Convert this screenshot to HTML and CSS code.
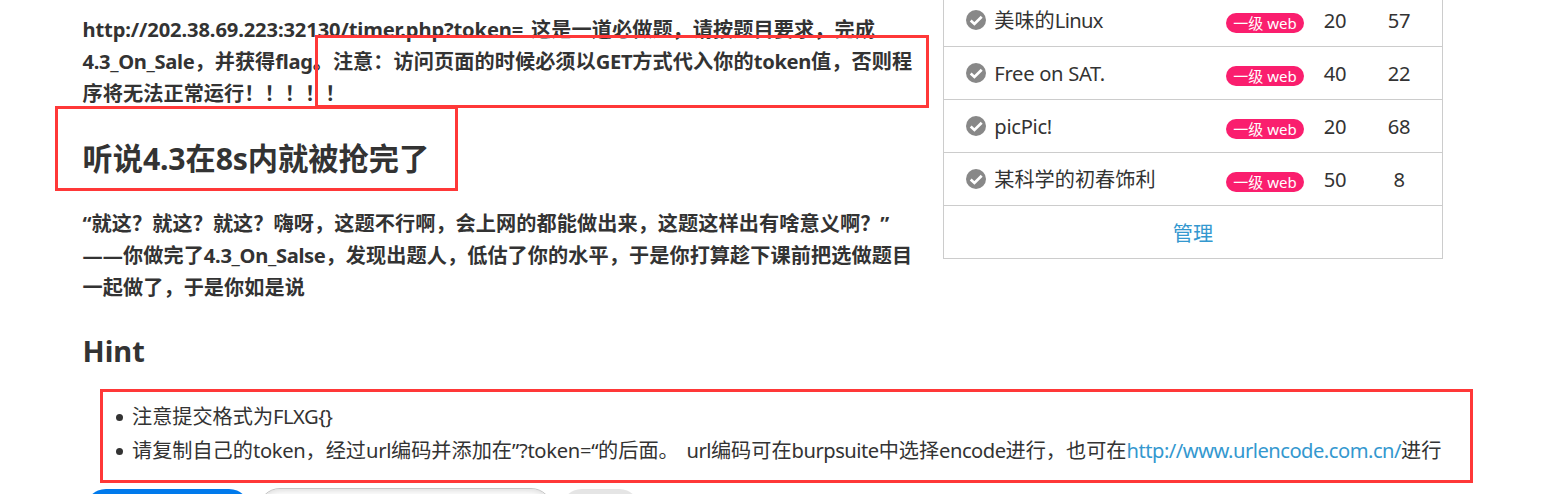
FILE: index.html
```html
<!DOCTYPE html>
<html lang="zh-CN">
<head>
<meta charset="utf-8">
<title>4.3_On_Sale</title>
<link rel="stylesheet" href="styles.css">
</head>
<body>
<svg class="defs" width="0" height="0"><symbol id="check" viewBox="0 0 20 20"><circle cx="10" cy="10" r="10" fill="#888"/><path d="M4.7 10.6 8.4 14 15.7 6.8" fill="none" stroke="#fff" stroke-width="2.7"/></symbol></svg>
<main class="page">
  <div class="columns">
    <article class="article">
      <h4 class="text"><span class="url">http://202.38.69.223:32130/timer.php?token=</span> 这是一道必做题，请按题目要求，完成<br><span class="b">4.3_On_Sale</span>，并获得<span class="b">flag</span>。注意：访问页面的时候必须以<span class="b">GET</span>方式代入你的<span class="b">token</span>值，否则程<br>序将无法正常运行！！！！！</h4>
      <h2 class="title">听说<span class="tb">4.3</span>在<span class="tb">8s</span>内就被抢完了</h2>
      <h4 class="text quote">“就这？就这？就这？嗨呀，这题不行啊，会上网的都能做出来，这题这样出有啥意义啊？”<br>——你做完了<span class="b">4.3_On_Salse</span>，发现出题人，低估了你的水平，于是你打算趁下课前把选做题目<br>一起做了，于是你如是说</h4>
    </article>
    <aside class="board">
      <div class="row"><svg class="check"><use href="#check"/></svg><span class="name">美味的<span class="r">Linux</span></span><span class="badge">一级 web</span><span class="num">20</span><span class="num wide">57</span></div>
      <div class="row"><svg class="check"><use href="#check"/></svg><span class="name"><span class="r2">Free on SAT.</span></span><span class="badge">一级 web</span><span class="num">40</span><span class="num wide">22</span></div>
      <div class="row"><svg class="check"><use href="#check"/></svg><span class="name"><span class="r2">picPic!</span></span><span class="badge">一级 web</span><span class="num">20</span><span class="num wide">68</span></div>
      <div class="row"><svg class="check"><use href="#check"/></svg><span class="name">某科学的初春饰利</span><span class="badge">一级 web</span><span class="num">50</span><span class="num wide">8</span></div>
      <div class="row manage"><a class="link">管理</a></div>
    </aside>
  </div>
  <h2 class="hint">Hint</h2>
  <ul class="list">
    <li>注意提交格式为<span class="r">FLXG{}</span></li>
    <li>请复制自己的<span class="r2">token</span>，经过<span class="r2">url</span>编码并添加在<span class="r2">”?token=“</span>的后面。 <span class="r">url</span>编码可在<span class="r">burpsuite</span>中选择<span class="r">encode</span>进行，也可在<a class="link r">http://www.urlencode.com.cn/</a>进行</li>
  </ul>
  <div class="form"><span class="primary"></span><span class="field"></span><span class="secondary"></span></div>
</main>
<div class="mark mark-note"></div>
<div class="mark mark-title"></div>
<div class="mark mark-hint"></div>
</body>
</html>
```
FILE: styles.css
```css
* { box-sizing: border-box; }
body { margin: 0; width: 1541px; height: 494px; overflow: hidden; position: relative; background: #fff; color: #333; font: 20.16px/32px "Noto Sans", "Noto Sans CJK SC", sans-serif; }
.defs { position: absolute; }
.page { height: 494px; overflow: hidden; padding-left: 82.5px; white-space: nowrap; }
.columns { display: flex; height: 303px; }
.article { width: 860.5px; padding-top: 13px; }
.text { margin: 0; font-size: 20.16px; line-height: 32px; font-weight: 700; letter-spacing: .07px; word-spacing: 2.5px; }
.title { margin: 26px 0 0; font-size: 30.24px; line-height: 48px; font-weight: 700; }
.quote { margin-top: 24px; }
.url { letter-spacing: -.13px; }
.b { letter-spacing: -.33px; }
.tb { letter-spacing: -.2px; }
.r { letter-spacing: -.5px; }
.r2 { letter-spacing: -.3px; }
.board { width: 500px; height: 266px; margin-top: -7px; border: 1px solid #ccc; }
.row { height: 53px; display: flex; align-items: center; padding-left: 22px; border-bottom: 1px solid #ccc; }
.row:last-child { border-bottom: 0; }
.check { flex: none; width: 20px; height: 20px; margin: 0 8px 0 0; }
.name { width: 232px; padding-left: .3px; }
.name .r { letter-spacing: -.7px; }
.badge { width: 78px; height: 20px; border-radius: 10px; background: #fa1e6e; color: #fff; font-size: 15px; line-height: 21px; text-align: center; margin-top: 6px; }
.num { width: 62px; text-align: center; letter-spacing: -.3px; }
.num.wide { width: 66px; }
.manage { justify-content: center; padding: 0; }
.link { color: #3498cf; }
.hint { margin: 24px 0 0; font-size: 29px; line-height: 48px; font-weight: 700; }
.list { margin: 24px 0 0; padding: 0; list-style: none; word-spacing: 2.5px; }
.list li { display: flow-root; height: 34px; line-height: 34px; }
.list li::before { content: ""; display: inline-block; width: 7px; height: 7px; border-radius: 50%; background: #333; margin: 0 9.5px 3px 33px; }
.form { display: flex; padding-left: 2.5px; margin-top: 21px; }
.primary { width: 165px; height: 42px; border-radius: 21px; background: #007aec; margin: 1px 8px 0 0; }
.field { width: 295px; height: 44px; border-radius: 22px; border: 1px solid #c5c5c5; box-shadow: inset 0 2px 6px rgba(0,0,0,.14); margin-right: 8px; }
.secondary { width: 79px; height: 42px; border-radius: 21px; background: #e5e5e5; margin-top: 1px; }
.mark { position: absolute; border: 3px solid #ff3838; }
.mark-note { left: 315px; top: 35px; width: 614px; height: 73px; }
.mark-title { left: 55px; top: 106px; width: 403px; height: 85px; }
.mark-hint { left: 100px; top: 389px; width: 1373px; height: 94px; }
```
